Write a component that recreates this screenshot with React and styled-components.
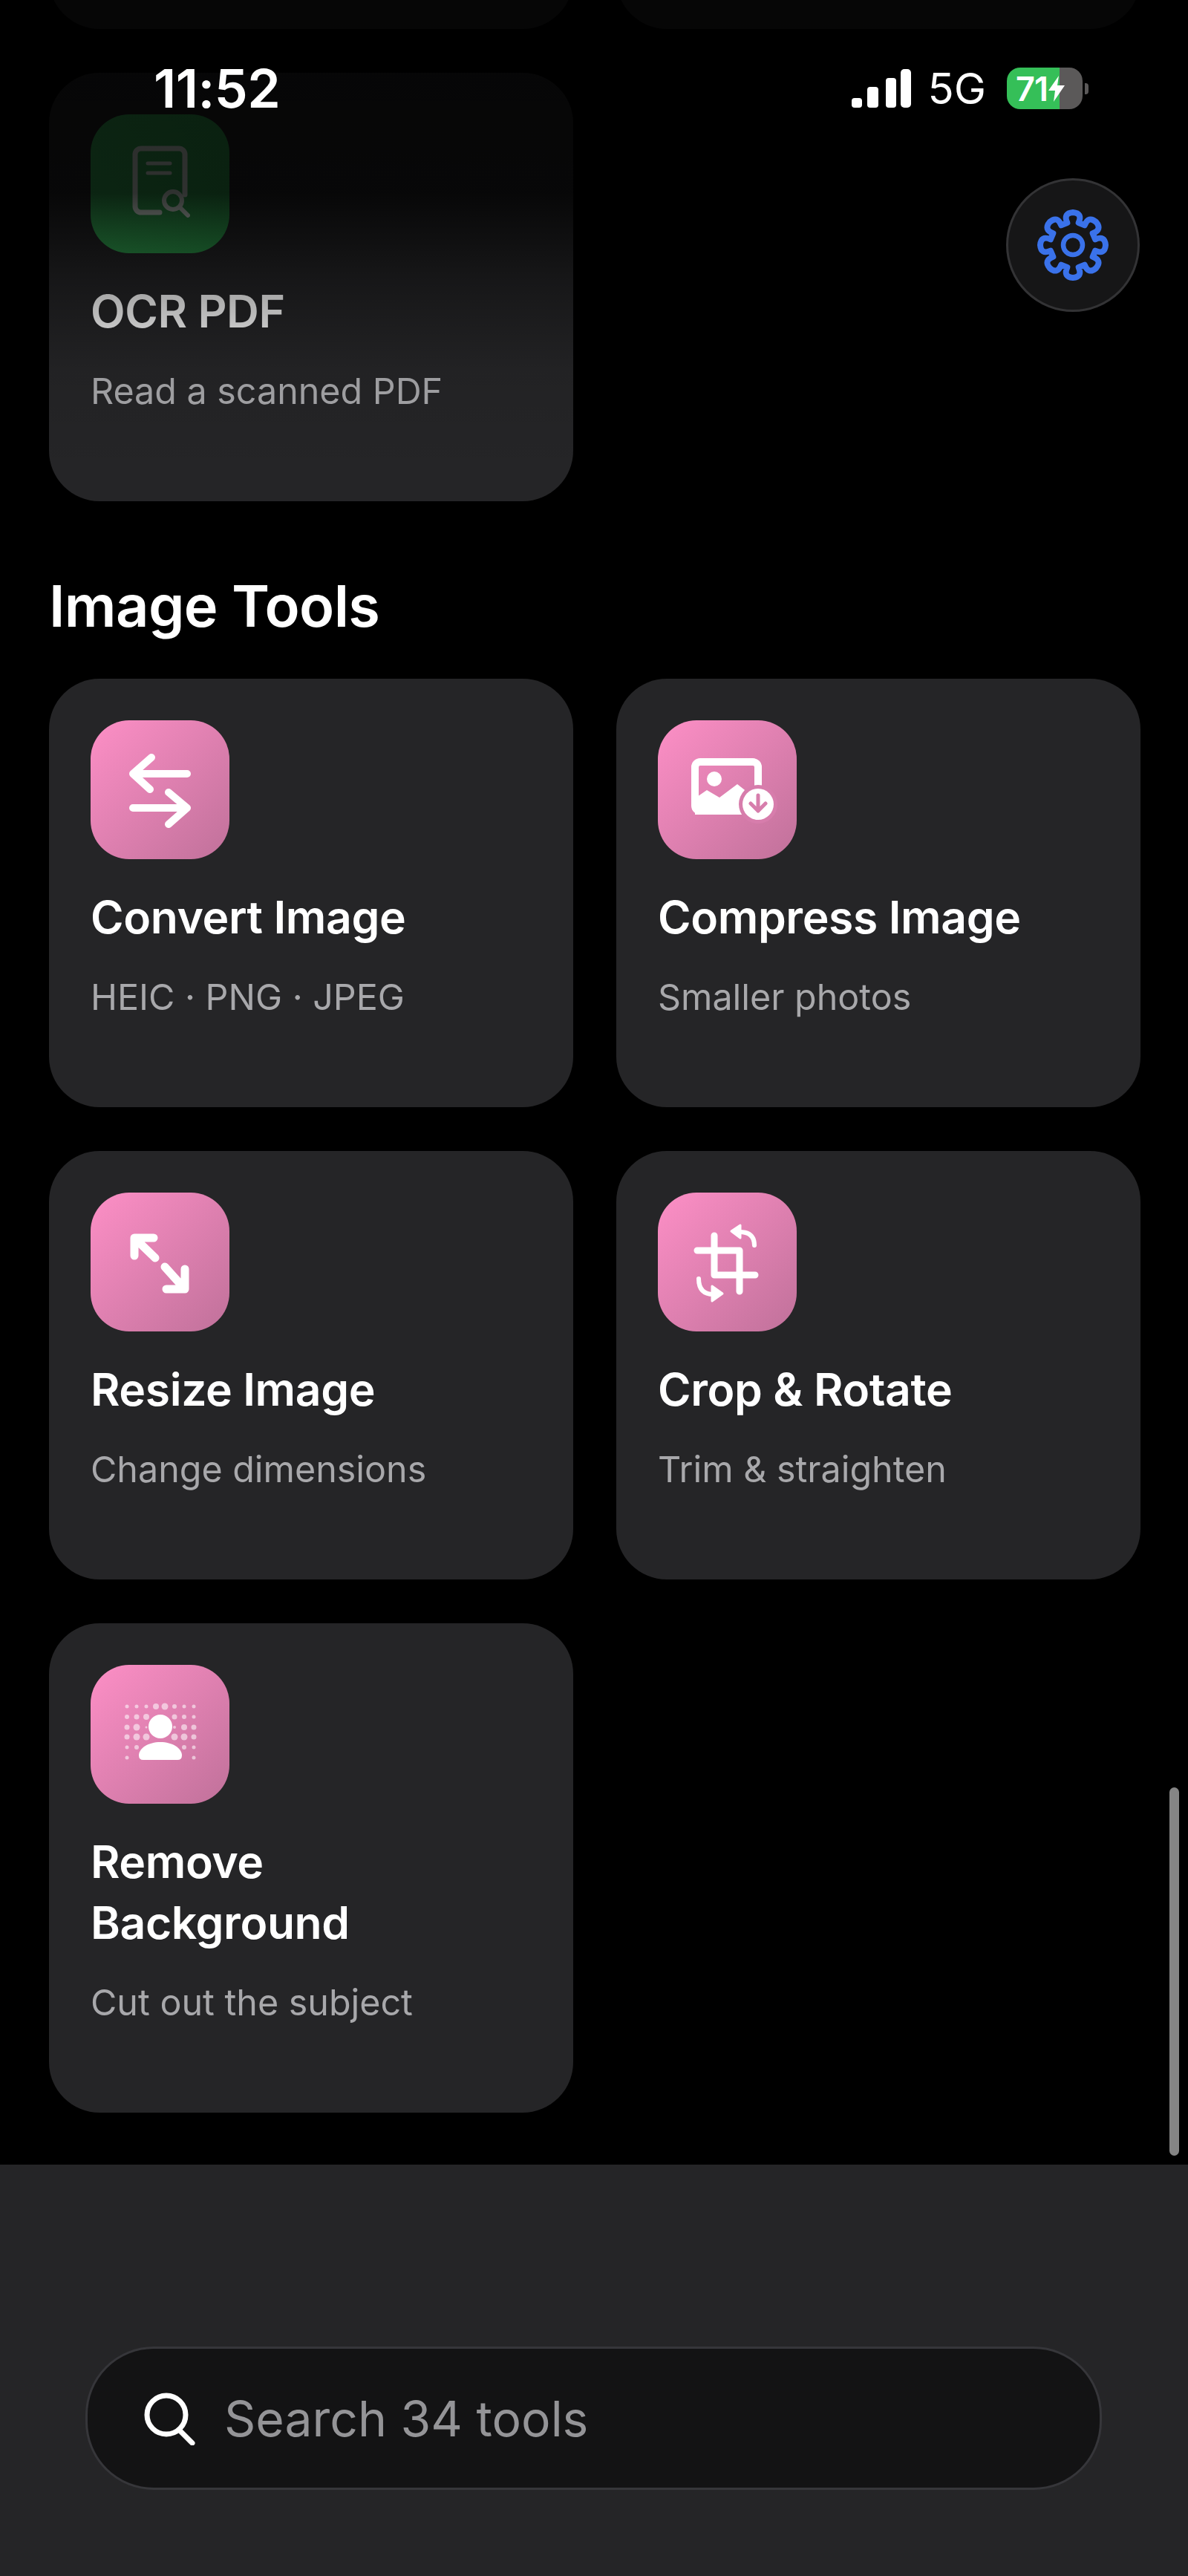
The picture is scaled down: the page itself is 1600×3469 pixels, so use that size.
import React from "react";
import styled, { createGlobalStyle } from "styled-components";

const GlobalStyle = createGlobalStyle`
  html, body {
    margin: 0;
    padding: 0;
    background: #000;
  }
  body {
    font-family: "Inter", "Liberation Sans", sans-serif;
    -webkit-font-smoothing: antialiased;
  }
`;

const Screen = styled.div`
  position: relative;
  width: 1600px;
  height: 3469px;
  overflow: hidden;
  background: #000;
  display: flex;
  flex-direction: column;
`;

const Scroller = styled.main`
  height: 2915px;
  flex: none;
  overflow: hidden;
  padding: 0 66px;
  box-sizing: border-box;
`;

// list is scrolled, the row above OCR PDF only peeks out at the top
const ScrolledContent = styled.div`
  margin-top: -539px;
  display: flex;
  flex-direction: column;
`;

const CardGrid = styled.div`
  display: grid;
  grid-template-columns: 706px 706px;
  gap: 59px 58px;
`;

const SectionTitle = styled.h2`
  margin: 95px 0 52px;
  font-size: 77.5px;
  line-height: 92px;
  font-weight: 600;
  letter-spacing: -0.6px;
  color: #fff;
`;

const Card = styled.div`
  background: #252527;
  border-radius: 68px;
  padding: 56px 56px 118px;
  min-height: ${({ $stub }) => ($stub ? "578px" : "0")};
  box-sizing: border-box;
`;

const IconTile = styled.div`
  width: 187px;
  height: 187px;
  border-radius: 52px;
  background: ${({ $tone }) =>
    $tone === "green"
      ? "linear-gradient(150deg, #3fc463, #2c9a4a)"
      : "linear-gradient(135deg, #fd8fc6, #c0719a)"};
  svg {
    display: block;
  }
`;

const CardTitle = styled.div`
  margin-top: 37px;
  font-size: 60.6px;
  line-height: 82px;
  font-weight: 600;
  letter-spacing: -0.4px;
  color: #fff;
`;

const CardSub = styled.div`
  margin-top: 37px;
  font-size: 48.4px;
  line-height: 60px;
  font-weight: 400;
  color: #a8a8ab;
`;

const TopFade = styled.div`
  position: absolute;
  top: 0;
  left: 0;
  right: 0;
  height: 640px;
  pointer-events: none;
  background: linear-gradient(
    180deg,
    rgba(0, 0, 0, 0.85) 0,
    rgba(0, 0, 0, 0.8) 260px,
    rgba(0, 0, 0, 0.38) 380px,
    rgba(0, 0, 0, 0.08) 500px,
    rgba(0, 0, 0, 0) 640px
  );
`;

const StatusBar = styled.div`
  position: absolute;
  top: 91px;
  left: 207px;
  right: 134px;
  height: 56px;
  display: flex;
  align-items: center;
  justify-content: space-between;
  color: #fff;
`;

const Clock = styled.div`
  font-size: 71.5px;
  line-height: 56px;
  font-weight: 600;
  letter-spacing: -0.5px;
`;

const StatusRight = styled.div`
  display: flex;
  align-items: center;
`;

const Network = styled.div`
  margin: 0 28px 0 22px;
  font-size: 58px;
  line-height: 56px;
  font-weight: 400;
`;

const Battery = styled.div`
  width: 102px;
  height: 56px;
  border-radius: 18px;
  background: linear-gradient(90deg, #35bf58 70%, #5b5959 70%);
  display: flex;
  align-items: center;
  padding-left: 12px;
  box-sizing: border-box;
  font-size: 45px;
  font-weight: 600;
  letter-spacing: -1px;
`;

const BatteryNub = styled.div`
  width: 5px;
  height: 15px;
  margin-left: 3px;
  border-radius: 0 4px 4px 0;
  background: #5b5959;
`;

const SettingsButton = styled.button`
  position: absolute;
  top: 240px;
  left: 1355px;
  width: 180px;
  height: 180px;
  padding: 0;
  border-radius: 50%;
  border: 3px solid #333335;
  background: #161617;
  display: flex;
  align-items: center;
  justify-content: center;
`;

const ScrollThumb = styled.div`
  position: absolute;
  top: 2407px;
  left: 1575px;
  width: 13px;
  height: 496px;
  border-radius: 7px;
  background: #858585;
`;

const BottomBar = styled.footer`
  flex: 1;
  background: #252527;
  padding: 245px 116px 0 115px;
`;

const SearchPill = styled.div`
  height: 193px;
  box-sizing: border-box;
  border: 3px solid #36363a;
  border-radius: 92px;
  background: #131314;
  display: flex;
  align-items: center;
  padding-left: 76px;
  gap: 38px;
`;

const SearchText = styled.span`
  font-size: 66px;
  font-weight: 400;
  color: #949497;
`;

const gearPath = (() => {
  const cx = 50;
  const cy = 50;
  const R = 44;
  const r = 31;
  const parts = [];
  for (let i = 0; i < 8; i++) {
    const a = (i * Math.PI) / 4 - Math.PI / 2;
    const pt = (rad, off) =>
      `${(cx + rad * Math.cos(a + off)).toFixed(2)} ${(cy + rad * Math.sin(a + off)).toFixed(2)}`;
    parts.push(
      `${i === 0 ? "M" : "L"}${pt(r, -0.25)} Q${pt(R + 1, -0.3)} ${pt(R, 0)} Q${pt(R + 1, 0.3)} ${pt(r, 0.25)}`
    );
  }
  return parts.join(" ") + " Z";
})();

const GearIcon = () => (
  <svg width="100" height="100" viewBox="0 0 100 100" fill="none" stroke="#3a72ea" strokeWidth="8" strokeLinejoin="round">
    <path d={gearPath} />
    <circle cx="50" cy="50" r="13" strokeWidth="6.5" />
  </svg>
);

const SignalIcon = () => (
  <svg width="80" height="52" viewBox="0 0 80 52" fill="#fff">
    <rect x="0" y="39" width="14" height="13" rx="4" />
    <rect x="21" y="24" width="15" height="28" rx="4" />
    <rect x="46" y="12" width="14" height="40" rx="4" />
    <rect x="66" y="0" width="14" height="52" rx="5" />
  </svg>
);

const BoltIcon = () => (
  <svg width="24" height="35" viewBox="0 0 24 35" fill="#fff" style={{ flex: "none" }}>
    <path d="M15 0 L1 20 H10 L8 35 L23 13 H13 Z" />
  </svg>
);

const SearchIcon = () => (
  <svg width="70" height="72" viewBox="0 0 70 72" fill="none" stroke="#fff" strokeWidth="7" strokeLinecap="round">
    <circle cx="30" cy="31" r="26" />
    <path d="M47 51 L65 69" />
  </svg>
);

const TileSvg = ({ children, ...rest }) => (
  <svg width="187" height="187" viewBox="0 0 187 187" fill="none" stroke="#fff" strokeLinecap="round" strokeLinejoin="round" {...rest}>
    {children}
  </svg>
);

const OcrIcon = () => (
  <TileSvg strokeWidth="7" opacity="0.9">
    <path d="M127 108 V54 a8 8 0 0 0 -8 -8 H68 a8 8 0 0 0 -8 8 V124 a8 8 0 0 0 8 8 H93" />
    <path d="M77 66 H107 M77 79 H107" strokeWidth="5" />
    <circle cx="111" cy="116" r="12" strokeWidth="6" />
    <path d="M120 125 L131 136" strokeWidth="6" />
  </TileSvg>
);

const ConvertIcon = () => (
  <TileSvg strokeWidth="10">
    <path d="M130 72 H57 M82 50 L57 72 L80 93" />
    <path d="M57 118 H130 M105 97 L130 118 L105 140" />
  </TileSvg>
);

const CompressIcon = () => (
  <TileSvg>
    <rect x="50" y="56" width="85" height="66" rx="7" strokeWidth="10" />
    <circle cx="76" cy="79" r="10" fill="#fff" stroke="none" />
    <path d="M50 105 L66 94 L83 104 L107 86 L135 108 V127 H50 Z" fill="#fff" stroke="none" />
    <circle cx="135" cy="113" r="26" fill="#d77dac" stroke="none" />
    <circle cx="135" cy="113" r="21" fill="#fff" stroke="none" />
    <path d="M135 101 V122 M125 112 L135 122 L145 112" stroke="#d77dac" strokeWidth="5" />
  </TileSvg>
);

const ResizeIcon = () => (
  <TileSvg strokeWidth="11">
    <path d="M85 61 H59 V85 M59 61 L87 88" />
    <path d="M127 103 V130 H102 M127 130 L100 100" />
  </TileSvg>
);

const CropIcon = () => (
  <TileSvg strokeWidth="9">
    <path d="M76 58 V111 H131 M53 78 H110 V133" />
    <path d="M130 71 Q130 53 110 53 M55 116 Q55 137 75 137" strokeWidth="6" />
    <path d="M99 52 L111 44 V61 Z M87 136 L73 126 V146 Z" fill="#fff" strokeWidth="3" />
  </TileSvg>
);

// dot radius per grid cell, 0 where the person covers the halftone
const dotColumns = [49, 62, 75, 88, 100, 113, 126, 139];
const dotRows = [
  { y: 56, radii: [2.5, 2.5, 2.5, 4, 4.5, 3, 2.5, 2.5] },
  { y: 70, radii: [3, 3.5, 4, 0, 0, 3.5, 3, 2.5] },
  { y: 84, radii: [3.5, 4.5, 1.5, 0, 0, 2, 4, 3.5] },
  { y: 97, radii: [3.5, 4.5, 4.5, 0, 0, 4.5, 4.5, 3.5] },
  { y: 111, radii: [2.5, 3, 0, 0, 0, 0, 3, 2.5] },
  { y: 125, radii: [2.5, 0, 0, 0, 0, 0, 0, 2.5] },
];

const RemoveBgIcon = () => (
  <TileSvg stroke="none">
    {dotRows.map(({ y, radii }) =>
      radii.map((r, i) =>
        r > 0 ? <circle key={`${y}-${i}`} cx={dotColumns[i]} cy={y} r={r} fill="#fff" opacity="0.55" /> : null
      )
    )}
    <circle cx="94" cy="83" r="16" fill="#fff" />
    <path d="M65 122 C65 112 78 104 94 104 C110 104 123 112 123 122 Q123 128 117 128 H71 Q65 128 65 122 Z" fill="#fff" />
  </TileSvg>
);

const ToolCard = ({ icon, tone, title, sub }) => (
  <Card>
    <IconTile $tone={tone}>{icon}</IconTile>
    <CardTitle>{title}</CardTitle>
    <CardSub>{sub}</CardSub>
  </Card>
);

const imageTools = [
  { icon: <ConvertIcon />, title: "Convert Image", sub: "HEIC · PNG · JPEG" },
  { icon: <CompressIcon />, title: "Compress Image", sub: "Smaller photos" },
  { icon: <ResizeIcon />, title: "Resize Image", sub: "Change dimensions" },
  { icon: <CropIcon />, title: "Crop & Rotate", sub: "Trim & straighten" },
  { icon: <RemoveBgIcon />, title: <>Remove<br />Background</>, sub: "Cut out the subject" },
];

const App = () => (
  <Screen>
    <GlobalStyle />
    <Scroller>
      <ScrolledContent>
        <CardGrid>
          <Card $stub />
          <Card $stub />
          <ToolCard icon={<OcrIcon />} tone="green" title="OCR PDF" sub="Read a scanned PDF" />
        </CardGrid>
        <SectionTitle>Image Tools</SectionTitle>
        <CardGrid>
          {imageTools.map((tool) => (
            <ToolCard key={tool.sub} {...tool} />
          ))}
        </CardGrid>
      </ScrolledContent>
    </Scroller>
    <BottomBar>
      <SearchPill>
        <SearchIcon />
        <SearchText>Search 34 tools</SearchText>
      </SearchPill>
    </BottomBar>
    <TopFade />
    <StatusBar>
      <Clock>11:52</Clock>
      <StatusRight>
        <SignalIcon />
        <Network>5G</Network>
        <Battery>
          71
          <BoltIcon />
        </Battery>
        <BatteryNub />
      </StatusRight>
    </StatusBar>
    <SettingsButton aria-label="Settings">
      <GearIcon />
    </SettingsButton>
    <ScrollThumb />
  </Screen>
);

export default App;
